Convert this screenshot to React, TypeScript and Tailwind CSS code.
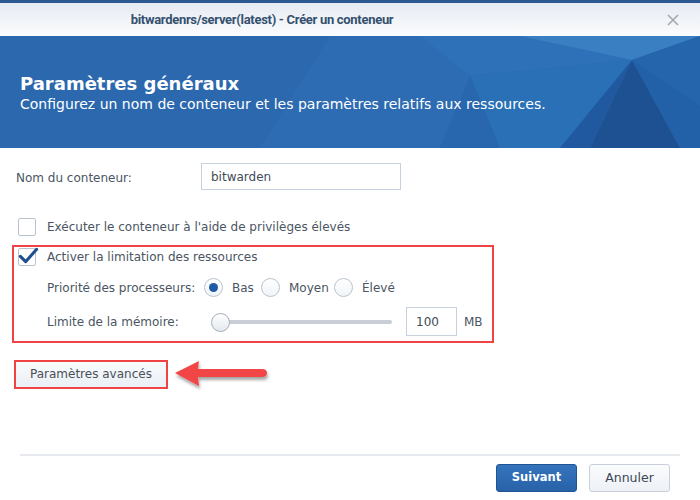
import React from "react";

function Checkbox({ checked }: { checked?: boolean }) {
  return (
    <div className="relative w-[18px] h-[18px] shrink-0 rounded-[2px] border border-[#b9c3cf] bg-white">
      {checked && (
        <svg className="absolute -left-[1px] -top-[4px]" width="21" height="21" viewBox="0 0 22 22">
          <path d="M2.5 12 L8 17.5 L19.5 4.5" fill="none" stroke="#1f4f8c" strokeWidth="3.2" strokeLinecap="round" strokeLinejoin="round" />
        </svg>
      )}
    </div>
  );
}

function Radio({ checked }: { checked?: boolean }) {
  return (
    <div className="w-[19px] h-[19px] shrink-0 rounded-full border border-[#b9c3cf] bg-gradient-to-b from-white to-[#f1f4f8] flex items-center justify-center">
      {checked && <div className="w-[9px] h-[9px] rounded-full bg-[#1f5aa5]" />}
    </div>
  );
}

function Arrow() {
  return (
    <svg width="100" height="34" viewBox="0 0 100 34" className="shrink-0">
      <defs>
        <filter id="sh" x="-20%" y="-30%" width="140%" height="170%">
          <feDropShadow dx="1" dy="3" stdDeviation="1.5" floodColor="#000" floodOpacity="0.35" />
        </filter>
      </defs>
      <path
        d="M2 15 L26 3 L25 11 L89 11 Q94 11 94 15 Q94 19 89 19 L25 19 L26 28 Z"
        fill="#f24444"
        filter="url(#sh)"
      />
    </svg>
  );
}

export default function App() {
  return (
    <div className="w-[700px] h-[500px] bg-white overflow-hidden flex flex-col text-[12px] text-[#4b5563]" style={{ fontFamily: '"DejaVu Sans", Verdana, sans-serif' }}>
      <div className="h-[3px] bg-[#2d5891]" />
      <div className="h-[33px] bg-gradient-to-b from-[#e6ebf2] to-[#fbfcfd] flex items-center">
        <div className="flex-1 flex justify-center pr-[142px] text-[13px] font-bold tracking-[-0.3px] text-[#34506f] font-['Roboto',sans-serif]">
          bitwardenrs/server(latest) - Créer un conteneur
        </div>
        <svg width="14" height="14" viewBox="0 0 14 14" className="mr-[20px]">
          <path d="M2 2 L12 12 M12 2 L2 12" stroke="#a3a9b1" strokeWidth="1.6" />
        </svg>
      </div>

      <div className="relative h-[112px] bg-[#2b69b0] overflow-hidden">
        <svg className="absolute inset-0" width="700" height="112" viewBox="0 0 700 112">
          <polygon points="0,0 330,0 260,112 0,112" fill="#2b68ae" />
          <polygon points="330,0 470,0 500,112 260,112" fill="#2d6cb3" />
          <polygon points="420,0 520,0 632,24 470,40" fill="#2f71b8" />
          <polygon points="520,0 700,0 632,24" fill="#3a7fc1" />
          <polygon points="632,24 700,0 700,70" fill="#2465ab" />
          <polygon points="470,40 632,24 560,112 500,112" fill="#2a70b7" />
          <polygon points="632,24 590,112 680,112" fill="#1d5192" />
          <polygon points="632,24 700,70 700,112 680,112" fill="#2261a7" />
          <polygon points="632,24 560,112 590,112" fill="#2059a0" />
          <polygon points="470,40 500,112 440,112" fill="#2866ad" />
        </svg>
        <div className="relative pl-[20px] pt-[37px] text-white">
          <div className="text-[18px] font-bold leading-[22px]">Paramètres généraux</div>
          <div className="text-[14px] leading-[19px]">Configurez un nom de conteneur et les paramètres relatifs aux ressources.</div>
        </div>
      </div>

      <div className="flex-1 flex flex-col px-[12px]">
        <div className="flex items-center mt-[15px] pl-[4px]">
          <div className="w-[185px] pt-[2px]">Nom du conteneur:</div>
          <div className="w-[200px] h-[27px] border border-[#c7d1de] flex items-center px-[9px] text-[#3f4a57]">bitwarden</div>
        </div>

        <div className="flex items-center gap-[11px] mt-[28px] pl-[6px]">
          <Checkbox />
          <span>Exécuter le conteneur à l'aide de privilèges élevés</span>
        </div>

        <div className="w-[482px] h-[98px] mt-[9px] border-[2.5px] border-[#f04343] flex flex-col pl-[4px]">
          <div className="flex items-center gap-[11px] mt-[1px]">
            <Checkbox checked />
            <span>Activer la limitation des ressources</span>
          </div>
          <div className="flex items-center mt-[12px] pl-[29px]">
            <span className="w-[157px]">Priorité des processeurs:</span>
            <Radio checked />
            <span className="ml-[9px] w-[29px]">Bas</span>
            <Radio />
            <span className="ml-[9px] w-[45px]">Moyen</span>
            <Radio />
            <span className="ml-[9px]">Élevé</span>
          </div>
          <div className="flex items-center mt-[10px] pl-[29px]">
            <span className="w-[164px]">Limite de la mémoire:</span>
            <div className="relative w-[182px] h-[20px] flex items-center">
              <div className="ml-[9px] w-[172px] h-[4px] rounded-full bg-[#c9ced6]" />
              <div className="absolute left-0 top-[1px] w-[19px] h-[19px] rounded-full border border-[#a4aeba] bg-gradient-to-b from-white to-[#e3e8ef]" />
            </div>
            <div className="ml-[13px] w-[51px] h-[29px] border border-[#c7d1de] flex items-center px-[9px] text-[#3f4a57]">100</div>
            <span className="ml-[7px]">MB</span>
          </div>
        </div>

        <div className="flex items-center mt-[13px] pl-[2px]">
          <div className="border-[2.5px] border-[#f04343]">
            <div className="h-[25px] px-[14px] flex items-center bg-gradient-to-b from-[#f9fbfd] to-[#eaf0f6] text-[#4a4f57]">
              Paramètres avancés
            </div>
          </div>
          <div className="ml-[5px] mt-[2px]">
            <Arrow />
          </div>
        </div>

        <div className="flex-1" />
        <div className="mx-[8px] h-[2px] bg-[#e6e9ed]" />
        <div className="flex justify-end gap-[12px] pr-[18px] mt-[8px] mb-[8px]">
          <div className="w-[81px] h-[28px] rounded-[3px] border border-[#1e5494] bg-gradient-to-b from-[#3474bd] to-[#2862a8] text-white font-bold text-[11.5px] flex items-center justify-center">
            Suivant
          </div>
          <div className="w-[81px] h-[28px] rounded-[3px] border border-[#c7d0dc] bg-gradient-to-b from-[#fafbfd] to-[#edf1f6] text-[#3b4756] text-[12.5px] flex items-center justify-center">
            Annuler
          </div>
        </div>
      </div>
    </div>
  );
}
